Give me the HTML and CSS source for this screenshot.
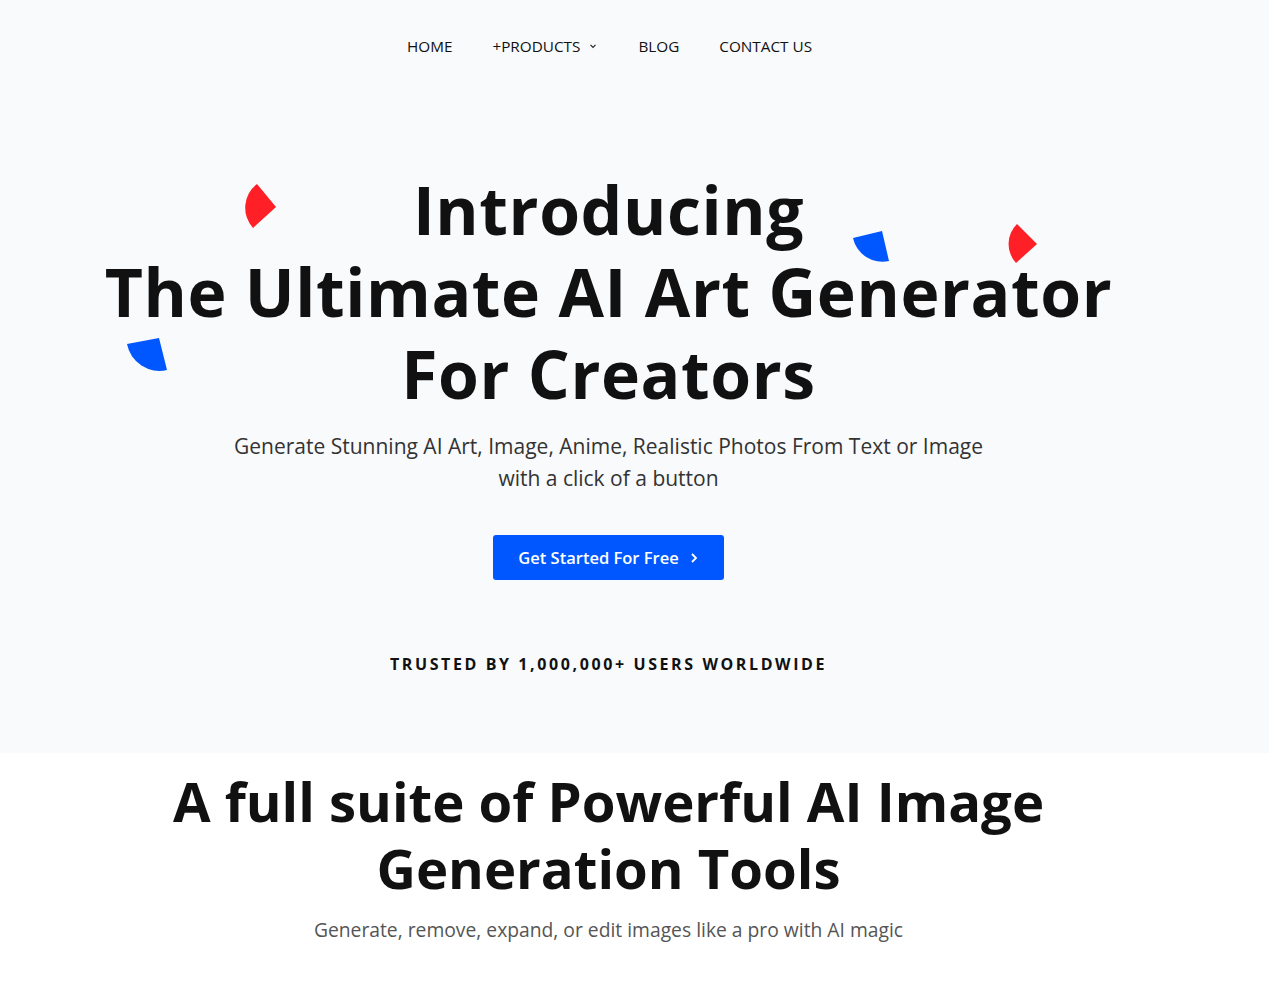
FILE: index.html
```html
<!DOCTYPE html>
<html lang="en">
<head>
<meta charset="utf-8">
<title>AI Art Generator</title>
<link rel="stylesheet" href="styles.css">
</head>
<body>
<div class="hero">
  <nav class="nav">
    <a class="nav-link" href="#">HOME</a>
    <a class="nav-link" href="#">+PRODUCTS <svg class="chev" width="10" height="10" viewBox="0 0 10 10"><path d="M2.5 3.8 L5 6.3 L7.5 3.8" fill="none" stroke="#222" stroke-width="1.2"/></svg></a>
    <a class="nav-link" href="#">BLOG</a>
    <a class="nav-link" href="#">CONTACT US</a>
  </nav>
  <svg class="shapes" width="1269" height="420" viewBox="0 0 1269 420">
    <path d="M276 207 L257 184 A30 30 0 0 0 253 228 Z" fill="#ff1f26"/>
    <path d="M1037 244 L1017 224 A28 28 0 0 0 1016 263 Z" fill="#ff1f26"/>
    <path d="M882 231 L853 238 A30 30 0 0 0 889 261 Z" fill="#0057ff"/>
    <path d="M159 338 L127 344 A33 33 0 0 0 167 370 Z" fill="#0057ff"/>
  </svg>
  <h1 class="title">Introducing<br>The Ultimate AI Art Generator<br>For Creators</h1>
  <p class="lead">Generate Stunning AI Art, Image, Anime, Realistic Photos From Text or Image<br>with a click of a button</p>
  <a class="cta" href="#">Get Started For Free <svg width="10" height="12" viewBox="0 0 10 12"><path d="M3 2 L7 6 L3 10" fill="none" stroke="#fff" stroke-width="1.8"/></svg></a>
  <p class="trusted">TRUSTED BY 1,000,000+ USERS WORLDWIDE</p>
</div>
<section class="tools">
  <h2 class="tools-title">A full suite of Powerful AI Image<br>Generation Tools</h2>
  <p class="tools-sub">Generate, remove, expand, or edit images like a pro with AI magic</p>
</section>
</body>
</html>
```
FILE: styles.css
```css
* { box-sizing: border-box; }
body {
  margin: 0;
  font-family: "Open Sans", "Noto Sans", sans-serif;
  color: #111;
  background: #fff;
}
.hero {
  position: relative;
  background: #f8fafc;
  height: 753px;
  padding-right: 52px;
  display: flex;
  flex-direction: column;
  align-items: center;
}
.nav {
  position: relative;
  display: flex;
  align-items: center;
  gap: 40px;
  height: 92px;
  padding-left: 2px;
}
.nav-link {
  font-size: 15.3px;
  font-weight: 500;
  color: #111;
  text-decoration: none;
  display: flex;
  align-items: center;
  gap: 8px;
}
.shapes {
  position: absolute;
  left: 0;
  top: 0;
  pointer-events: none;
}
.title {
  position: relative;
  margin: 76px 0 0;
  text-align: center;
  font-size: 66px;
  line-height: 82px;
  font-weight: 700;
  color: #111;
  letter-spacing: 0.6px;
}
.lead {
  margin: 16px 0 0;
  text-align: center;
  font-size: 21px;
  line-height: 32px;
  color: #333;
}
.cta {
  margin-top: 41px;
  width: 231px;
  height: 45px;
  background: #0057ff;
  border-radius: 3px;
  color: #fff;
  text-decoration: none;
  font-size: 16.5px;
  font-weight: 600;
  display: flex;
  align-items: center;
  justify-content: center;
  gap: 10px;
}
.trusted {
  margin: 73px 0 0;
  font-size: 16px;
  font-weight: 700;
  letter-spacing: 2.6px;
  color: #111;
}
.tools {
  text-align: center;
  padding-top: 15px;
  padding-right: 52px;
}
.tools-title {
  margin: 0;
  font-size: 54.5px;
  line-height: 67px;
  font-weight: 700;
  color: #111;
}
.tools-sub {
  margin: 14px 0 0;
  font-size: 19.3px;
  color: #555;
}
```
